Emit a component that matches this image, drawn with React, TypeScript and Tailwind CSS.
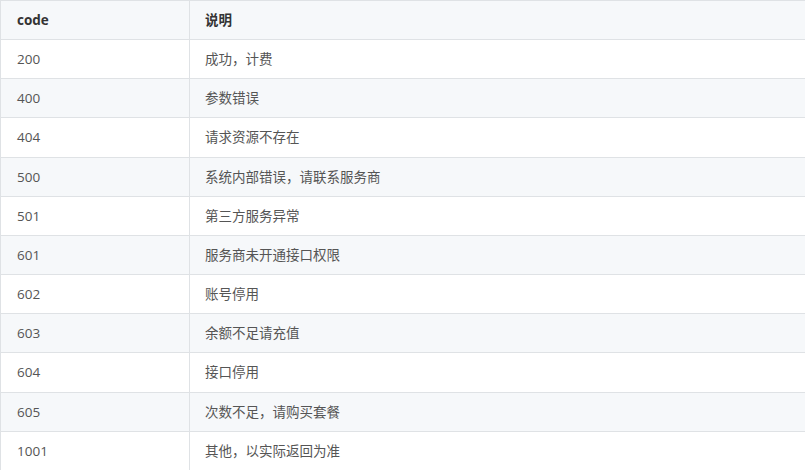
const rows: [string, string][] = [
  ["200", "成功，计费"],
  ["400", "参数错误"],
  ["404", "请求资源不存在"],
  ["500", "系统内部错误，请联系服务商"],
  ["501", "第三方服务异常"],
  ["601", "服务商未开通接口权限"],
  ["602", "账号停用"],
  ["603", "余额不足请充值"],
  ["604", "接口停用"],
  ["605", "次数不足，请购买套餐"],
  ["1001", "其他，以实际返回为准"],
];

export default function App() {
  return (
    <div
      className="w-[805px] h-[470px] overflow-hidden bg-white text-[13.5px] text-[#555]"
      style={{ fontFamily: '"Open Sans", "Noto Sans CJK SC", sans-serif' }}
    >
      {/* header */}
      <div className="grid grid-cols-[189px_1fr] h-[39.17px] bg-[#f6f8fa] border-t border-l border-[#dfe2e5] font-bold text-[#333]">
        <div className="flex items-center pl-4 border-r border-[#dfe2e5]">code</div>
        <div className="flex items-center pl-[15px]">说明</div>
      </div>

      {rows.map(([code, desc], i) => (
        <div
          key={code}
          className={`grid grid-cols-[189px_1fr] h-[39.17px] border-t border-l border-[#dfe2e5] ${
            i % 2 === 1 ? "bg-[#f6f8fa]" : "bg-white"
          }`}
        >
          <div className="flex items-center pl-4 border-r border-[#dfe2e5]">{code}</div>
          <div className="flex items-center pl-[15px]">{desc}</div>
        </div>
      ))}
    </div>
  );
}
